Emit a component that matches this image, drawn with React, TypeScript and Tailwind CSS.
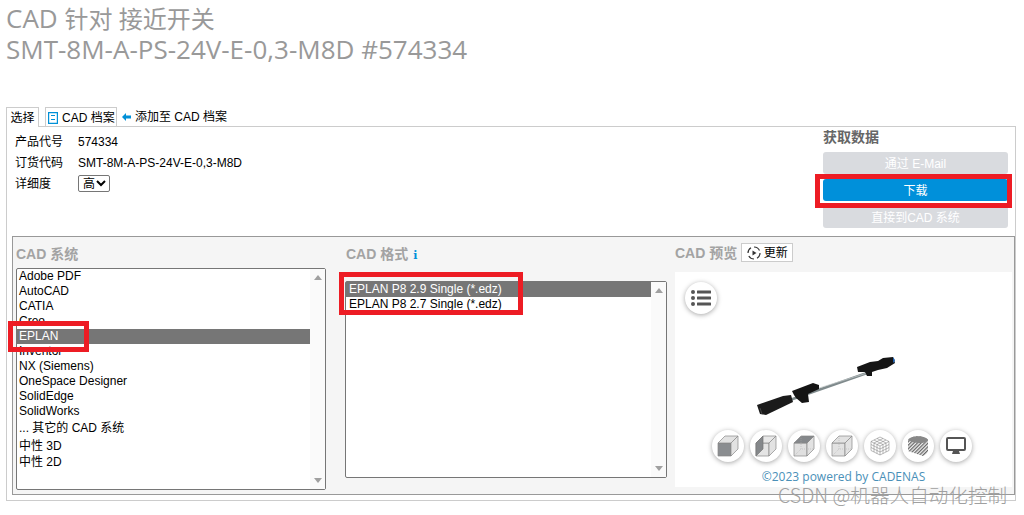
const sans = 'font-["Liberation_Sans","Noto_Sans_CJK_SC",sans-serif]';

const systems = ['Adobe PDF', 'AutoCAD', 'CATIA', 'Creo', 'EPLAN', 'Inventor', 'NX (Siemens)', 'OneSpace Designer', 'SolidEdge', 'SolidWorks'];

function Scrollbar() {
  return (
    <div className="flex w-[15px] shrink-0 flex-col items-center justify-between bg-[#fafafa] py-[6px]">
      <div className="h-0 w-0 border-x-[4px] border-b-[5px] border-x-transparent border-b-[#a0a0a0]" />
      <div className="h-0 w-0 border-x-[4px] border-t-[5px] border-x-transparent border-t-[#a0a0a0]" />
    </div>
  );
}

function Cube({ front, side, top, left }: { front: string; side: string; top: string; left?: string }) {
  return (
    <svg width="22" height="22" viewBox="0 0 22 22">
      <path d="M1 8h13v13H1z" fill={front} stroke="#888" strokeWidth="0.7" />
      <path d="M14 8l7-7v13l-7 7z" fill={side} stroke="#888" strokeWidth="0.7" />
      <path d="M1 8l7-7h13l-7 7z" fill={top} stroke="#888" strokeWidth="0.7" />
      {left && <path d="M1 8l7-7v13l-7 7z" fill={left} stroke="#777" strokeWidth="0.7" />}
      {!left && front !== '#8a8d90' && <path d="M8 1v13H21M8 14l-7 7" fill="none" stroke="#aaa" strokeWidth="0.5" strokeDasharray="1 1" />}
    </svg>
  );
}

function Round({ children }: { children: React.ReactNode }) {
  return (
    <div className="flex h-8 w-8 items-center justify-center rounded-full bg-white shadow-[0_1px_5px_rgba(0,0,0,0.35)]">
      {children}
    </div>
  );
}

function ListIcon() {
  return (
    <svg width="20" height="16" viewBox="0 0 20 16" fill="#555">
      <circle cx="2" cy="2" r="2" />
      <circle cx="2" cy="8" r="2" />
      <circle cx="2" cy="14" r="2" />
      <rect x="6" y="0.5" width="14" height="3" rx="0.5" />
      <rect x="6" y="6.5" width="14" height="3" rx="0.5" />
      <rect x="6" y="12.5" width="14" height="3" rx="0.5" />
    </svg>
  );
}

function Model() {
  return (
    <svg width="142" height="62" viewBox="0 0 142 62" className="ml-[80px] mt-[41px]">
      <path d="M32 46L112 18" stroke="#7f8a8c" strokeWidth="2.6" />
      <path d="M48 38L112 18" stroke="#c5cccc" strokeWidth="0.7" />
      <path d="M2 50l26-9 8-1 2 7-27 13-6-1z" fill="#1b1b1b" />
      <path d="M5 53l2 6" stroke="#555" strokeWidth="0.7" />
      <path d="M37 36l21-8 6 2v4l-11 5 1 8-7 1-6-5-2-3z" fill="#141414" />
      <path d="M102 12l13-5 8-1 5-3 10-1 2 6-8 5-9 2-6 2v4h-5l-2-4-7 0z" fill="#151515" />
      <path d="M138 2l2 3-1 3-1-1z" fill="#1d5fae" />
    </svg>
  );
}

export default function App() {
  return (
    <div className={`relative h-[515px] w-[1024px] overflow-hidden bg-white text-[12px] text-black ${sans}`}>
      {/* Title */}
      <div className='h-[107px] pl-[6px] pt-[3px] font-["Open_Sans","Noto_Sans_CJK_SC",sans-serif] text-[26px] leading-[30px] text-[#999]'>
        <div className="h-[30px]">CAD <span className="text-[24px]">针对 接近开关</span></div>
        <div className="mt-px">SMT-8M-A-PS-24V-E-0,3-M8D #574334</div>
      </div>

      {/* Tabs */}
      <div className="ml-[6px] flex h-[20px] items-stretch">
        <div className="z-10 flex h-[20px] w-[33px] items-center justify-center border border-b-0 border-[#ccc] bg-white pt-px">选择</div>
        <div className="ml-[6px] flex h-[19px] w-[72px] items-center gap-[4px] border border-b-0 border-[#ccc] pl-[2px] pt-px">
          <svg width="10" height="12" viewBox="0 0 10 12" fill="none" stroke="#0090d7" strokeWidth="1.2">
            <path d="M.6.6h8.800v10.800H.6zM3 3.500h4M3 7.500h4" />
          </svg>
          CAD 档案
        </div>
        <div className="ml-[5px] flex h-[19px] items-center gap-[4px] pt-px">
          <svg width="9" height="8" viewBox="0 0 9 8" fill="#0090d7">
            <path d="M0 4l4-4v2.500h5v3H4V8z" />
          </svg>
          添加至 CAD 档案
        </div>
      </div>

      {/* Main panel */}
      <div className="-mt-px ml-[6px] h-[375px] w-[1010px] border border-[#ccc] px-[5px]">
        <div className="flex h-[109px] justify-between pr-[2px]">
          <div className="pl-[3px] pt-[5px]">
            <div className="flex h-[20px] items-center">
              <span className="w-[63px]">产品代号</span>574334
            </div>
            <div className="flex h-[21px] items-center">
              <span className="w-[63px]">订货代码</span>SMT-8M-A-PS-24V-E-0,3-M8D
            </div>
            <div className="flex h-[21px] items-center">
              <span className="w-[63px]">详细度</span>
              <div className="flex h-[17px] w-[32px] items-center gap-[1px] rounded-[2px] border border-[#767676] pl-[4px]">
                高
                <svg width="10" height="7" viewBox="0 0 10 7" fill="none" stroke="#000" strokeWidth="2">
                  <path d="M1 1l4 4 4-4" />
                </svg>
              </div>
            </div>
          </div>

          <div className="w-[185px] pt-[3px]">
            <div className="h-[22px] text-[14px] font-bold leading-[14px] text-[#666]">获取数据</div>
            <div className="flex h-[22px] items-center justify-center rounded-[3px] bg-[#d9dbdf] pt-px text-white">通过 E-Mail</div>
            <div className="mt-[5px] flex h-[22px] items-center justify-center rounded-[3px] bg-[#0090da] pt-px text-white">下载</div>
            <div className="mt-[5px] flex h-[22px] items-center justify-center rounded-[3px] bg-[#d9dbdf] pt-px text-white">直接到CAD 系统</div>
          </div>
        </div>

        {/* CAD selection */}
        <div className="flex h-[259px] w-[1003px] border border-[#999] bg-[#f5f5f5]">
          <div className="w-[332px] pl-[3px] pt-[8px]">
            <div className="h-[23px] text-[14px] font-bold leading-[18px] text-[#a3a3a3]">CAD 系统</div>
            <div className="flex h-[222px] w-[310px] rounded-[2px] border border-[#767676] bg-white">
              <div className="flex-1">
                {systems.map((s) => (
                  <div key={s} className={`h-[15px] pl-[2px] leading-[15px] ${s === 'EPLAN' ? 'bg-[#767676] text-white' : ''}`}>{s}</div>
                ))}
                <div className="h-[19px] pl-[2px] leading-[19px]">... 其它的 CAD 系统</div>
                <div className="h-[16px] pl-[2px] leading-[16px]">中性 3D</div>
                <div className="h-[17px] pl-[2px] leading-[17px]">中性 2D</div>
              </div>
              <Scrollbar />
            </div>
          </div>

          <div className="w-[330px] pt-[8px]">
            <div className="h-[36px] pl-px text-[14px] font-bold leading-[18px] text-[#a3a3a3]">
              CAD 格式 <span className="ml-[1px] font-['DejaVu_Serif',serif] text-[11px] text-[#0090da]">i</span>
            </div>
            <div className="flex h-[197px] w-[322px] rounded-[2px] border border-[#767676] bg-white">
              <div className="flex-1">
                <div className="h-[15px] bg-[#767676] pl-[3px] leading-[15px] text-white">EPLAN P8 2.9 Single (*.edz)</div>
                <div className="h-[15px] pl-[3px] leading-[15px]">EPLAN P8 2.7 Single (*.edz)</div>
              </div>
              <Scrollbar />
            </div>
          </div>

          <div className="flex-1 pt-[6px]">
            <div className="flex h-[29px] items-start gap-[4px]">
              <span className="text-[14px] font-bold leading-[20px] text-[#a3a3a3]">CAD 预览</span>
              <div className="flex h-[19px] w-[52px] items-center justify-center gap-[3px] border border-[#ccc] bg-white">
                <svg width="14" height="14" viewBox="0 0 14 14" fill="none" stroke="#333" strokeWidth="1.2">
                  <path d="M7 1a6 6 0 0 1 5.500 3.500M13 7a6 6 0 0 1-3 5.200M7 13a6 6 0 0 1-5.200-3M1 7a6 6 0 0 1 3-5.200" />
                  <path d="M5.500 4.500l4 2.500-4 2.500z" fill="#333" stroke="none" />
                </svg>
                更新
              </div>
            </div>
            <div className="flex h-[215px] w-[337px] flex-col bg-white">
              <div className="pl-[10px] pt-[10px]">
                <Round><ListIcon /></Round>
              </div>
              <Model />
              <div className="mt-[13px] flex gap-[6px] pl-[37px]">
                <Round><Cube front="#8a8d90" side="#e2e2e2" top="#e2e2e2" /></Round>
                <Round><Cube front="#e4e4e4" side="#e2e2e2" top="#e8e8e8" left="#85888b" /></Round>
                <Round><Cube front="#e0e0e0" side="#e2e2e2" top="#85888b" /></Round>
                <Round><Cube front="#e2e2e2" side="#e2e2e2" top="#e2e2e2" /></Round>
                <Round>
                  <svg width="22" height="22" viewBox="0 0 22 22" fill="none" stroke="#777" strokeWidth="0.5">
                    <path d="M11 2l9 4.500v9L11 20l-9-4.500v-9zM2 6.500l9 4.500 9-4.500M11 11v9" />
                    <path d="M5 5l9 4.500M8 3.500l9 4.500M17 5L8 9.500M14 3.500L5 8M2 9.500l9 4.500 9-4.500M2 12.500l9 4.500 9-4.500M5 8v9M8 9.500v9M14 9.500v9M17 8v9" />
                  </svg>
                </Round>
                <Round>
                  <svg width="22" height="22" viewBox="0 0 22 22">
                    <defs>
                      <pattern id="hatch" width="2.500" height="2.500" patternUnits="userSpaceOnUse" patternTransform="rotate(45)">
                        <rect width="2.500" height="2.500" fill="#eee" />
                        <rect width="1.200" height="2.500" fill="#666" />
                      </pattern>
                    </defs>
                    <path d="M1 5c3-5 17-5 20 0v11c-1 3-3 4-5 5L1 16z" fill="url(#hatch)" />
                    <path d="M1 5c3-5 17-5 20 0-3 3-6 3-9 3S3 7 1 5z" fill="#888" />
                  </svg>
                </Round>
                <Round>
                  <svg width="20" height="18" viewBox="0 0 20 18" fill="#555">
                    <path d="M2 0h16a2 2 0 0 1 2 2v10a2 2 0 0 1-2 2H2a2 2 0 0 1-2-2V2a2 2 0 0 1 2-2zm0 2v10h16V2z" fillRule="evenodd" />
                    <path d="M7 14h6l1 3H6z" />
                  </svg>
                </Round>
              </div>
              <div className='mt-[7px] text-center font-["Open_Sans",sans-serif] text-[12px] leading-[16px] text-[#4a90b8]'>©2023 powered by CADENAS</div>
            </div>
          </div>
        </div>
      </div>

      {/* Red annotation boxes */}
      <div className="absolute left-[815px] top-[174px] h-[34px] w-[197px] border-[5px] border-[#ed1c24]" />
      <div className="absolute left-[8px] top-[321px] h-[31px] w-[81px] border-[5px] border-[#ed1c24]" />
      <div className="absolute left-[339px] top-[272px] h-[43px] w-[184px] border-[5px] border-[#ed1c24]" />

      {/* Watermark */}
      <div className='absolute left-[778px] top-[486px] font-["Noto_Sans_CJK_SC",sans-serif] text-[19.6px] font-light leading-[18px] text-[#a0a0a0]'>CSDN @机器人自动化控制</div>
    </div>
  );
}
